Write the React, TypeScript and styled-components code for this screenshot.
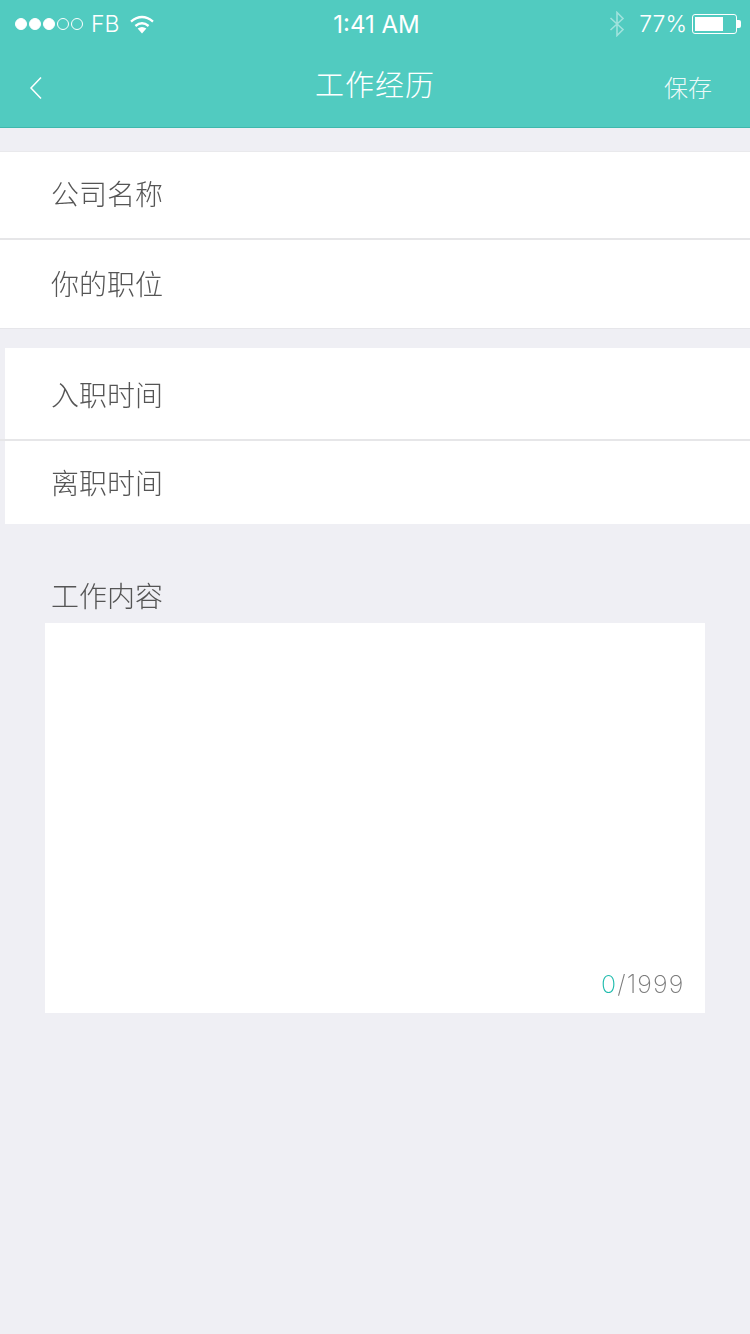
import styled, { createGlobalStyle } from "styled-components";

const GlobalStyle = createGlobalStyle`
  html, body {
    margin: 0;
    padding: 0;
    background: #efeff4;
  }
  * {
    box-sizing: border-box;
  }
`;

const cjk = `"Noto Sans CJK SC", "Noto Sans", sans-serif`;

function WifiIcon() {
  return (
    <svg width="26" height="20" viewBox="0 0 26 20">
      <path d="M13 19.5 L8.6 14.6 Q13 11.4 17.4 14.6 Z" fill="#fff" />
      <path d="M6.4 12 Q13 6.6 19.6 12" fill="none" stroke="#fff" strokeWidth="2.4" />
      <path d="M2 7.6 Q13 -1.4 24 7.6" fill="none" stroke="#fff" strokeWidth="2.4" />
    </svg>
  );
}

function BluetoothIcon() {
  return (
    <svg width="16" height="26" viewBox="0 0 16 26">
      <path
        d="M1.5 7 L14 18.5 L8 24.5 V1.5 L14 7.5 L1.5 19"
        fill="none"
        stroke="#fff"
        strokeOpacity="0.45"
        strokeWidth="1.6"
      />
    </svg>
  );
}

function BackIcon() {
  return (
    <svg width="14" height="24" viewBox="0 0 14 24">
      <path d="M12 1.5 L2 12 L12 22.5" fill="none" stroke="#fff" strokeWidth="1.5" />
    </svg>
  );
}

export default function App() {
  return (
    <Page>
      <GlobalStyle />
      <Header>
        <StatusBar>
          <StatusLeft>
            <Signal>
              <Dot $filled />
              <Dot $filled />
              <Dot $filled />
              <Dot />
              <Dot />
            </Signal>
            <Carrier>FB</Carrier>
            <WifiIcon />
          </StatusLeft>
          <Clock>1:41 AM</Clock>
          <StatusRight>
            <BluetoothIcon />
            <Percent>77%</Percent>
            <Battery>
              <BatteryFill />
            </Battery>
            <BatteryCap />
          </StatusRight>
        </StatusBar>
        <NavBar>
          <BackButton>
            <BackIcon />
          </BackButton>
          <NavTitle>工作经历</NavTitle>
          <SaveButton>保存</SaveButton>
        </NavBar>
      </Header>

      <Group>
        <Row $height={86} $lift={4}>公司名称</Row>
        <Divider />
        <Row $height={88} $lift={2}>你的职位</Row>
      </Group>

      <InsetGroup>
        <Row $height={91} $textLeft={46}>入职时间</Row>
        <InsetDivider />
        <Row $height={83} $textLeft={46} $lift={2}>离职时间</Row>
      </InsetGroup>

      <Label>工作内容</Label>
      <TextBox>
        <Counter>
          <CounterCurrent>0</CounterCurrent>/1999
        </Counter>
      </TextBox>
    </Page>
  );
}

const Page = styled.div`
  width: 750px;
  height: 1334px;
  overflow: hidden;
  background: #efeff4;
`;

const Header = styled.header`
  height: 128px;
  background: #51cbc0;
  border-bottom: 1px solid #3fb8ad;
  color: #fff;
`;

const StatusBar = styled.div`
  height: 48px;
  padding: 0 9px 0 15px;
  display: grid;
  grid-template-columns: 1fr auto 1fr;
  align-items: center;
`;

const StatusLeft = styled.div`
  display: flex;
  align-items: center;
`;

const Signal = styled.div`
  display: flex;
  gap: 2px;
`;

const Dot = styled.span<{ $filled?: boolean }>`
  width: 12px;
  height: 12px;
  border-radius: 50%;
  border: 1px solid #fff;
  background: ${(props) => (props.$filled ? "#fff" : "transparent")};
`;

const Carrier = styled.span`
  margin: 0 10px 0 8px;
  font: 300 23px "Inter", "Liberation Sans", sans-serif;
`;

const Clock = styled.span`
  font: 400 24px "Inter", "Liberation Sans", sans-serif;
  margin-left: -3px;
`;

const StatusRight = styled.div`
  display: flex;
  align-items: center;
  justify-content: flex-end;
`;

const Percent = styled.span`
  margin: 0 5px 0 14px;
  font: 300 23px "Inter", "Liberation Sans", sans-serif;
`;

const Battery = styled.div`
  width: 45px;
  height: 20px;
  padding: 2px;
  border: 1px solid #fff;
  border-radius: 3px;
`;

const BatteryFill = styled.div`
  width: 28px;
  height: 100%;
  background: #fff;
`;

const BatteryCap = styled.span`
  width: 4px;
  height: 8px;
  background: #fff;
  border-radius: 0 2px 2px 0;
`;

const NavBar = styled.nav`
  height: 79px;
  padding: 0 38px;
  display: grid;
  grid-template-columns: 1fr auto 1fr;
  align-items: center;
`;

const BackButton = styled.div`
  display: flex;
  align-items: center;
  margin-left: -9px;
  padding-top: 1px;
`;

const NavTitle = styled.h1`
  margin: 0 0 10px;
  font: 300 29px ${cjk};
  letter-spacing: 1px;
`;

const SaveButton = styled.span`
  justify-self: end;
  margin-bottom: 2px;
  font: 300 24px ${cjk};
  color: rgba(255, 255, 255, 0.9);
`;

const Group = styled.section`
  margin-top: 23px;
  background: #fff;
  border-top: 1px solid #e9e9ec;
  border-bottom: 1px solid #e6e6ea;
`;

const InsetGroup = styled.section`
  margin: 19px 0 0 5px;
  background: #fff;
`;

const Row = styled.div<{ $height: number; $textLeft?: number; $lift?: number }>`
  height: ${(props) => props.$height}px;
  padding-left: ${(props) => props.$textLeft ?? 51}px;
  padding-bottom: ${(props) => props.$lift ?? 0}px;
  display: flex;
  align-items: center;
  font: 300 28px ${cjk};
  color: #555;
  will-change: transform;
`;

const Divider = styled.div`
  height: 2px;
  background: #e6e6e8;
`;

const InsetDivider = styled(Divider)`
  margin-left: -5px;
`;

const Label = styled.div`
  margin: 43px 0 0 51px;
  height: 56px;
  display: flex;
  align-items: center;
  font: 300 28px ${cjk};
  color: #555;
  will-change: transform;
`;

const TextBox = styled.div`
  margin-left: 45px;
  width: 660px;
  height: 390px;
  padding: 0 21px 14px 0;
  background: #fff;
  display: flex;
  align-items: flex-end;
  justify-content: flex-end;
`;

const Counter = styled.div`
  font: 200 25px "Inter", "Liberation Sans", sans-serif;
  letter-spacing: 1.1px;
  color: #7c7c7c;
  will-change: transform;
`;

const CounterCurrent = styled.span`
  color: #22bcae;
`;
